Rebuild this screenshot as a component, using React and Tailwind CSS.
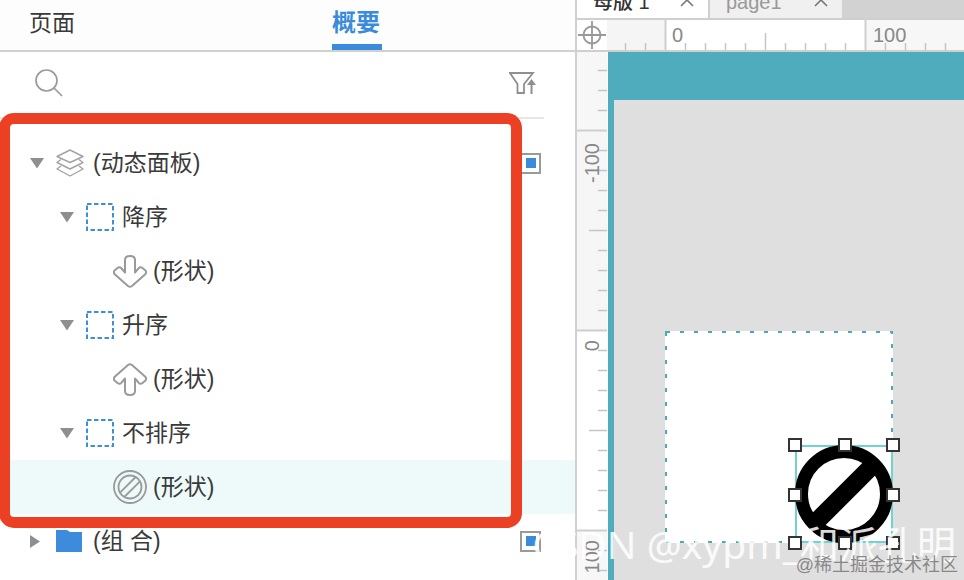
import React from 'react';

const CaretDown = () => (
  <svg width="14" height="11" viewBox="0 0 14 11"><path d="M0 0H14L7 10.5Z" fill="#8f8f8f" /></svg>
);

const CaretRight = () => (
  <svg width="10" height="13" viewBox="0 0 10 13"><path d="M0 0L10 6.5L0 13Z" fill="#8f8f8f" /></svg>
);

const LayersIcon = () => (
  <svg width="28" height="28" viewBox="0 0 28 28" fill="none" stroke="#a3a3a3" strokeWidth="1.4" strokeLinejoin="round">
    <path d="M14 1L27 7.5L14 13.5L1 7.5Z" />
    <path d="M5 10.5L1 13.5L14 20L27 13.5L23 10.5" />
    <path d="M5 17L1 20L14 27L27 20L23 17" />
  </svg>
);

const DashedBox = () => (
  <svg width="28" height="28" viewBox="0 0 28 28" fill="none">
    <rect x="1" y="1" width="26" height="26" stroke="#3f8fd2" strokeWidth="2" strokeDasharray="4.5 2.5" />
  </svg>
);

const ArrowDown = () => (
  <svg width="34" height="33" viewBox="0 0 34 33" fill="none" stroke="#9a9a9a" strokeWidth="2" strokeLinejoin="round">
    <path d="M12 17.5V5Q12 1 17 1Q22 1 22 5V17.5L25 14Q27 11 29.5 13L32.5 15.5Q34 17.5 32 19.5L19 31Q17 32.5 15 31L2 19.5Q0 17.5 1.5 15.5L4.5 13Q7 11 9 14Z" />
  </svg>
);

const ArrowUp = () => (
  <svg width="34" height="33" viewBox="0 0 34 33" fill="none" stroke="#9a9a9a" strokeWidth="2" strokeLinejoin="round">
    <path d="M12 15.5V28Q12 32 17 32Q22 32 22 28V15.5L25 19Q27 22 29.5 20L32.5 17.5Q34 15.5 32 13.5L19 2Q17 0.5 15 2L2 13.5Q0 15.5 1.5 17.5L4.5 20Q7 22 9 19Z" />
  </svg>
);

const NoIcon = () => (
  <svg width="34" height="34" viewBox="0 0 34 34" fill="none" stroke="#9a9a9a" strokeWidth="1.8">
    <circle cx="17" cy="17" r="16" />
    <circle cx="17" cy="17" r="11.5" />
    <path d="M7 22.7L22.7 7M11.3 27L27 11.3" />
  </svg>
);

const FolderIcon = () => (
  <svg width="26" height="22" viewBox="0 0 26 22"><path d="M0 0H11L14 2H26V22H0Z" fill="#3d8cdc" /></svg>
);

const GrayIcon = () => (
  <svg width="30" height="22" viewBox="0 0 30 22"><path d="M0 0H30V22H0Z" fill="#8f8f8f" /></svg>
);

function VisBox() {
  return (
    <div className="ml-auto mr-[34px] flex h-[21px] w-[21px] items-center justify-center border-2 border-[#9a9a9a]">
      <div className="h-[10px] w-[10px] bg-[#3b8bdc]" />
    </div>
  );
}

function Row({ pad, gap, caret, icon, label, vis, active }) {
  return (
    <div className={`flex h-[54px] shrink-0 items-center ${pad} ${active ? 'bg-[#edfaf9]' : ''}`}>
      {caret}
      <div className={gap}>{icon}</div>
      <span className="text-[23px] leading-none text-[#3a3a3a]">{label}</span>
      {vis && <VisBox />}
    </div>
  );
}

function HorizontalRuler() {
  const ticks = [];
  for (let x = 625; x <= 964; x += 20) {
    const major = (x - 665) % 200 === 0;
    const mid = (x - 665) % 100 === 0;
    ticks.push(<line key={x} x1={x - 607 + 0.5} x2={x - 607 + 0.5} y1={major ? 0 : mid ? 13 : 23} y2="30" stroke={major ? '#cfcfcf' : '#c4c4c4'} strokeWidth={major ? 2 : 1.5} />);
  }
  return (
    <div className="relative flex h-[30px] flex-1">
      <div className="w-[58px] bg-[#f5f5f5]" />
      <div className="w-[200px] bg-white" />
      <div className="flex-1 bg-[#f7f7f7]" />
      <svg className="absolute left-0 top-0" width="357" height="30">{ticks}</svg>
      <span className="absolute left-[65px] top-[1px] text-[20px] leading-[28px] text-[#888]">0</span>
      <span className="absolute left-[266px] top-[1px] text-[20px] leading-[28px] text-[#888]">100</span>
    </div>
  );
}

function VerticalRuler() {
  const ticks = [];
  for (let y = 70; y <= 580; y += 20) {
    const major = (y - 330) % 200 === 0;
    const mid = (y - 330) % 100 === 0;
    ticks.push(<line key={y} x1={major ? 0 : mid ? 12 : 21} x2="30" y1={y - 52 + 0.5} y2={y - 52 + 0.5} stroke={major ? '#cfcfcf' : '#c4c4c4'} strokeWidth={major ? 2 : 1.5} />);
  }
  return (
    <div className="relative flex w-[30px] shrink-0 flex-col">
      <div className="h-[78px] bg-[#f7f7f7]" />
      <div className="h-[200px] bg-[#f6f6f6]" />
      <div className="h-[200px] bg-white" />
      <div className="flex-1 bg-[#f7f7f7]" />
      <svg className="absolute left-0 top-0" width="30" height="528">{ticks}</svg>
      <span className="absolute left-[3px] top-[91px] rotate-180 text-[20px] leading-[24px] text-[#888] [writing-mode:vertical-rl]">-100</span>
      <span className="absolute left-[3px] top-[288px] rotate-180 text-[20px] leading-[24px] text-[#888] [writing-mode:vertical-rl]">0</span>
      <span className="absolute left-[3px] top-[488px] rotate-180 text-[20px] leading-[24px] text-[#888] [writing-mode:vertical-rl]">100</span>
    </div>
  );
}

function Handle({ pos }) {
  return <div className={`absolute h-[14px] w-[14px] border-2 border-[#333] bg-white ${pos}`} />;
}

export default function App() {
  return (
    <div className="relative flex h-[580px] w-[964px] overflow-hidden bg-white [font-family:'Liberation_Sans','Noto_Sans_CJK_SC',sans-serif]">
      {/* left panel */}
      <div className="flex w-[577px] shrink-0 flex-col border-r-2 border-[#d0d0d0]">
        <div className="flex h-[52px] shrink-0 border-b-2 border-[#d0d0d0] bg-[#fdfdfd]">
          <div className="pl-[29px] pt-[9px] text-[23px] leading-[28px] text-[#3a3a3a]">页面</div>
          <div className="ml-[257px] flex h-[50px] w-[50px] flex-col justify-between pt-[9px]">
            <span className="text-[24px] font-bold leading-[28px] text-[#3b8bdc]">概要</span>
            <div className="h-[6px] bg-[#3b8bdc]" />
          </div>
        </div>

        <div className="flex h-[67px] w-[544px] shrink-0 items-start justify-between border-b-2 border-[#e6e6e6] pl-[35px] pr-[5px] pt-[17px]">
          <svg width="28" height="28" viewBox="0 0 28 28" fill="none" stroke="#9a9a9a" strokeWidth="1.7">
            <circle cx="11.5" cy="11.5" r="10.5" />
            <path d="M19 19L27 27" />
          </svg>
          <svg className="mt-[3px]" width="30" height="23" viewBox="0 0 30 23" fill="none">
            <path d="M1 1H24L15 12V21H8.5V12Z" stroke="#8f8f8f" strokeWidth="1.8" />
            <path d="M22.5 22V11" stroke="#8f8f8f" strokeWidth="2" />
            <path d="M18 13L22.5 7L27 13Z" fill="#8f8f8f" />
          </svg>
        </div>

        <div className="flex flex-col pt-[17px]">
          <Row pad="pl-[30px]" gap="ml-[12px] mr-[9px]" caret={<CaretDown />} icon={<LayersIcon />} label="(动态面板)" vis />
          <Row pad="pl-[60px]" gap="ml-[12px] mr-[8px]" caret={<CaretDown />} icon={<DashedBox />} label="降序" />
          <Row pad="pl-[113px]" gap="mr-[6px]" icon={<ArrowDown />} label="(形状)" />
          <Row pad="pl-[60px]" gap="ml-[12px] mr-[8px]" caret={<CaretDown />} icon={<DashedBox />} label="升序" />
          <Row pad="pl-[113px]" gap="mr-[6px]" icon={<ArrowUp />} label="(形状)" />
          <Row pad="pl-[60px]" gap="ml-[12px] mr-[8px]" caret={<CaretDown />} icon={<DashedBox />} label="不排序" />
          <Row pad="pl-[113px]" gap="mr-[6px]" icon={<NoIcon />} label="(形状)" active />
          <Row pad="pl-[30px]" gap="ml-[16px] mr-[11px]" caret={<CaretRight />} icon={<FolderIcon />} label="(组 合)" vis />
          <Row pad="pl-[56px]" icon={<GrayIcon />} />
        </div>
      </div>

      {/* right side */}
      <div className="flex min-w-0 flex-1 flex-col">
        <div className="flex h-[20px] shrink-0 border-b-2 border-[#cfcfcf] bg-[#d2d2d2]">
          <div className="flex h-[18px] w-[133px] justify-between overflow-hidden border-r-2 border-[#cfcfcf] bg-white pl-[16px] pr-[14px]">
            <span className="-mt-[12px] text-[20px] font-medium leading-[28px] text-[#333]">母版 1</span>
            <svg className="shrink-0" width="14" height="7" viewBox="0 0 14 7" fill="none" stroke="#777" strokeWidth="1.6"><path d="M1 -6L13 6M13 -6L1 6" /></svg>
          </div>
          <div className="flex h-[18px] w-[132px] justify-between overflow-hidden bg-[#f0f0f0] pl-[16px] pr-[14px]">
            <span className="-mt-[12px] text-[20px] leading-[28px] text-[#999]">page1</span>
            <svg className="shrink-0" width="14" height="7" viewBox="0 0 14 7" fill="none" stroke="#777" strokeWidth="1.6"><path d="M1 -6L13 6M13 -6L1 6" /></svg>
          </div>
        </div>

        <div className="flex h-[32px] shrink-0 border-b-2 border-[#cfcfcf]">
          <div className="flex w-[30px] shrink-0 items-center justify-center bg-white pr-[1px]">
            <svg width="28" height="28" viewBox="0 0 28 28" fill="none" stroke="#999" strokeWidth="1.8">
              <circle cx="14" cy="14" r="8.5" />
              <path d="M14 0V28M0 14H28" />
            </svg>
          </div>
          <HorizontalRuler />
        </div>

        <div className="flex min-h-0 flex-1">
          <VerticalRuler />
          <div className="flex flex-1 flex-col border-l border-white">
            <div className="h-[48px] shrink-0 bg-[#4eacbd]" />
            <div className="flex flex-1">
              <div className="w-[6px] shrink-0 bg-[#4eacbd]" />
              <div className="flex-1 bg-[#dfdfdf] pl-[51px] pt-[231px]">
                <div className="relative flex h-[212px] w-[228px] items-end justify-end bg-white">
                  <svg className="absolute inset-0" width="228" height="212" fill="none">
                    <rect x="1" y="1" width="226" height="210" stroke="#4fa9b5" strokeWidth="2" strokeDasharray="4 10" />
                  </svg>
                  <div className="relative h-[98px] w-[98px] border-2 border-[#6fd3cf]">
                    <svg className="absolute -left-[2px] -top-[2px]" width="98" height="98" viewBox="0 0 98 98" fill="none" stroke="#000">
                      <circle cx="49" cy="49" r="42.5" strokeWidth="13" />
                      <path d="M18 80L80 18" strokeWidth="18" />
                    </svg>
                    <Handle pos="-left-[9px] -top-[9px]" />
                    <Handle pos="left-[41px] -top-[9px]" />
                    <Handle pos="-right-[9px] -top-[9px]" />
                    <Handle pos="-left-[9px] top-[41px]" />
                    <Handle pos="-right-[9px] top-[41px]" />
                    <Handle pos="-left-[9px] -bottom-[9px]" />
                    <Handle pos="left-[41px] -bottom-[9px]" />
                    <Handle pos="-right-[9px] -bottom-[9px]" />
                  </div>
                </div>
              </div>
            </div>
          </div>
        </div>
      </div>

      {/* red highlight box */}
      <div className="pointer-events-none absolute -left-[1px] top-[113px] h-[415px] w-[523px] rounded-[15px] border-[11px] border-[#ec4024]" />

      {/* watermarks */}
      <div className="absolute right-[8px] top-[520px] whitespace-nowrap text-[39px] leading-[48px] text-white/85 [font-family:'Noto_Sans','Noto_Sans_CJK_SC',sans-serif]">CSDN @xypm_和派孔明</div>
      <div className="absolute right-[6px] top-[553px] whitespace-nowrap text-[18px] leading-[24px] text-[#777]/85">@稀土掘金技术社区</div>
    </div>
  );
}
